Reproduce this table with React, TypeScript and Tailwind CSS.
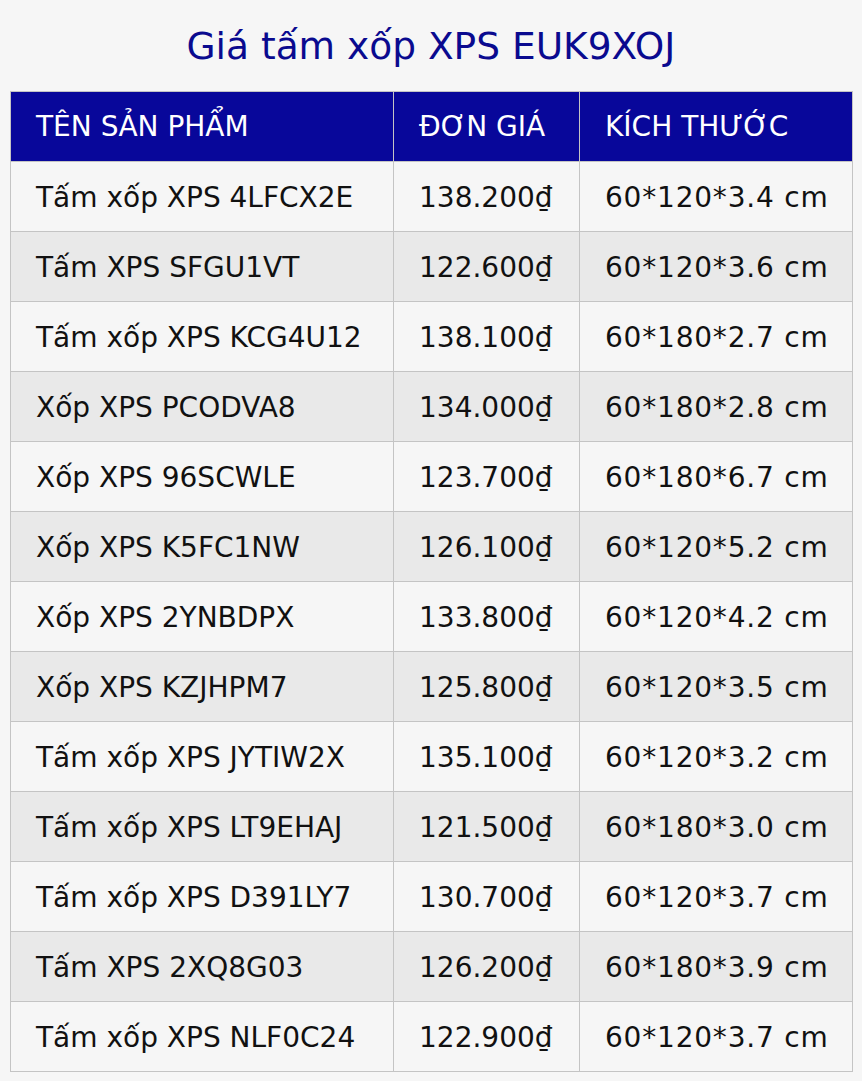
const rows: [string, string, string][] = [
  ["Tấm xốp XPS 4LFCX2E", "138.200₫", "60*120*3.4 cm"],
  ["Tấm XPS SFGU1VT", "122.600₫", "60*120*3.6 cm"],
  ["Tấm xốp XPS KCG4U12", "138.100₫", "60*180*2.7 cm"],
  ["Xốp XPS PCODVA8", "134.000₫", "60*180*2.8 cm"],
  ["Xốp XPS 96SCWLE", "123.700₫", "60*180*6.7 cm"],
  ["Xốp XPS K5FC1NW", "126.100₫", "60*120*5.2 cm"],
  ["Xốp XPS 2YNBDPX", "133.800₫", "60*120*4.2 cm"],
  ["Xốp XPS KZJHPM7", "125.800₫", "60*120*3.5 cm"],
  ["Tấm xốp XPS JYTIW2X", "135.100₫", "60*120*3.2 cm"],
  ["Tấm xốp XPS LT9EHAJ", "121.500₫", "60*180*3.0 cm"],
  ["Tấm xốp XPS D391LY7", "130.700₫", "60*120*3.7 cm"],
  ["Tấm XPS 2XQ8G03", "126.200₫", "60*180*3.9 cm"],
  ["Tấm xốp XPS NLF0C24", "122.900₫", "60*120*3.7 cm"],
];

export default function App() {
  return (
    <div className="min-h-[1081px] bg-[#f6f6f6] pt-[22px] font-['DejaVu_Sans',sans-serif]">
      <h1 className="text-center text-[37.5px] leading-[48px] text-[#0a0a8f]">Giá tấm xốp XPS EUK9XOJ</h1>
      <table className="ml-[10px] mt-[21px] w-[842px] table-fixed border-collapse text-[28px]">
        <colgroup>
          <col className="w-[383px]" />
          <col className="w-[186px]" />
          <col className="w-[273px]" />
        </colgroup>
        <thead>
          <tr className="h-[70px] bg-[#08079a] text-white">
            <th className="border border-[#c4c4c4] pl-[25px] text-left font-normal">TÊN SẢN PHẨM</th>
            <th className="border border-[#c4c4c4] pl-[25px] text-left font-normal">ĐƠN GIÁ</th>
            <th className="border border-[#c4c4c4] pl-[25px] text-left font-normal">KÍCH THƯỚC</th>
          </tr>
        </thead>
        <tbody className="text-[#111]">
          {rows.map((r, i) => (
            <tr key={i} className={`h-[70px] ${i % 2 === 0 ? "bg-[#f6f6f6]" : "bg-[#e9e9e9]"}`}>
              <td className="border border-[#c4c4c4] pl-[25px] pt-[2px]">{r[0]}</td>
              <td className="border border-[#c4c4c4] pl-[25px] pt-[2px]">{r[1]}</td>
              <td className="border border-[#c4c4c4] pl-[25px] pt-[2px] tracking-[0.8px]">{r[2]}</td>
            </tr>
          ))}
        </tbody>
      </table>
    </div>
  );
}
